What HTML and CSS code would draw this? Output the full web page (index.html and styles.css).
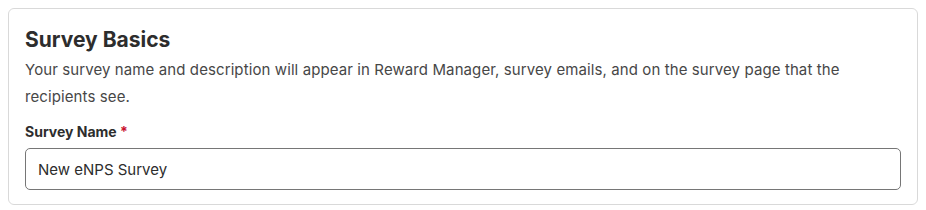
FILE: index.html
```html
<!DOCTYPE html>
<html lang="en">
<head>
    <meta charset="UTF-8">
    <title>Survey Basics</title>
    <link rel="stylesheet" href="styles.css">
</head>
<body>

    <div class="card">
        <h2 class="card-title">Survey Basics</h2>
        <p class="card-desc">Your survey name and description will appear in Reward Manager, survey emails, and on the survey page that the recipients see.</p>

        <label class="field-label" for="surveyName">Survey Name <span class="required">*</span></label>
        <input class="text-input" id="surveyName" type="text" value="New eNPS Survey">
    </div>

</body>
</html>
```

FILE: styles.css
```css
body {
    margin: 8px;
    font-family: Inter, "Noto Sans", sans-serif;
    background-color: #fff;
    color: #2d2d2d;
}
.card {
    border: 1px solid #d9d9d9;
    border-radius: 6px;
    padding: 16px 16px 14px;
}
.card-title {
    margin: 1px 0 0;
    font-size: 21px;
    font-weight: 700;
    line-height: 28px;
    color: #2d2d2d;
}
.card-desc {
    margin: 3px 0 0;
    font-size: 15px;
    letter-spacing: 0.1px;
    line-height: 26.5px;
    color: #474747;
}
.field-label {
    display: block;
    margin-top: 13px;
    font-size: 14px;
    font-weight: 700;
    line-height: 18px;
    color: #2d2d2d;
}
.required {
    color: #c8102e;
}
.text-input {
    display: block;
    box-sizing: border-box;
    width: 100%;
    height: 42px;
    margin-top: 7px;
    padding: 0 12px;
    border: 1px solid #767676;
    border-radius: 5px;
    font-family: Inter, "Noto Sans", sans-serif;
    font-size: 15px;
    color: #2d2d2d;
}
```
